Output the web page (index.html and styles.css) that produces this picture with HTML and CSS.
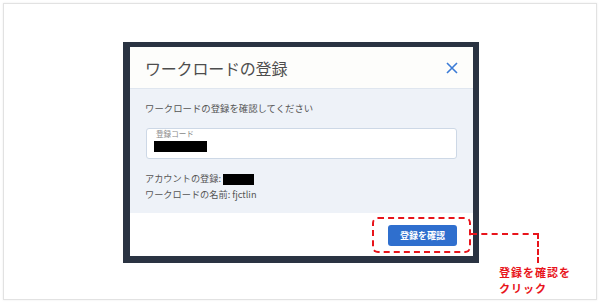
FILE: index.html
```html
<!DOCTYPE html>
<html>
  <head>
    <title>ワークロードの登録</title>
    <link rel="stylesheet" href="styles.css">
  </head>
  <body>
    <div class="canvas">
      <div class="page">
        <div class="modalFrame">
          <div class="modal">
            <div class="modalHeader">
              <span class="modalTitle">ワークロードの登録</span>
              <svg class="closeIcon" width="12" height="12" viewBox="0 0 12 12">
                <path d="M1 1 L11 11 M11 1 L1 11" stroke="#3b7bd6" stroke-width="1.6" fill="none"/>
              </svg>
            </div>
            <div class="modalBody">
              <div class="prompt">ワークロードの登録を確認してください</div>
              <div class="codeField">
                <div class="codeLabel">登録コード</div>
                <div class="redact codeValue"></div>
              </div>
              <div class="info">
                <div class="infoRow">アカウントの登録: <span class="redact accountValue"></span></div>
                <div class="infoRow">ワークロードの名前: fjctlin</div>
              </div>
            </div>
            <div class="modalFooter">
              <button class="confirmBtn">登録を確認</button>
            </div>
          </div>
        </div>
      </div>
      <div class="callout"></div>
      <div class="connector"></div>
      <div class="calloutText">
        <div class="calloutLine">登録を確認を</div>
        <div class="calloutLine">クリック</div>
      </div>
    </div>
  </body>
</html>
```

FILE: styles.css
```css
body { margin: 0; background: #fff; font-family: "Noto Sans CJK JP", "Noto Sans", sans-serif; }

.canvas { position: relative; width: 602px; height: 305px; }
.page { position: absolute; left: 3px; top: 3px; width: 594px; height: 297px; border: 1px solid #e2e2e2; box-shadow: 0 0 2px rgba(0,0,0,0.08); box-sizing: border-box; padding: 38px 0 0 119px; background: #fff; }

.modalFrame { width: 356px; background: #2a3342; padding: 5px 6px 7px 7px; box-sizing: border-box; }
.modal { display: flex; flex-direction: column; background: #fff; }

.modalHeader { display: flex; align-items: center; justify-content: space-between; height: 41px; padding: 0 15px; background: #fdfdfb; border-bottom: 1px solid #dfe6ef; }
.modalTitle { font-size: 16px; color: #4d4d4d; letter-spacing: -0.2px; }
.closeIcon { display: block; }

.modalBody { background: #eef2f8; padding: 12px 16px 11px 15px; height: 124px; box-sizing: border-box; color: #555; }
.prompt { font-size: 9.4px; line-height: 14px; }
.codeField { margin: 13px 0 0 1px; height: 31px; box-sizing: border-box; background: #fff; border: 1px solid #cdd8e6; border-radius: 3px; padding: 0 7px; }
.codeLabel { font-size: 7.6px; line-height: 9px; color: #888; padding-left: 2px; }
.redact { background: #000; }
.codeValue { width: 53px; height: 11px; margin-top: 3px; }

.info { margin-top: 11px; }
.infoRow { font-size: 9.2px; line-height: 16px; }
.accountValue { display: inline-block; width: 31px; height: 11px; vertical-align: middle; }

.modalFooter { display: flex; justify-content: flex-end; height: 43px; box-sizing: border-box; padding: 12px 16px 0 0; background: #fff; }
.confirmBtn { width: 69px; height: 21px; border: none; border-radius: 3px; background: #2f6fce; color: #fff; font-family: inherit; font-size: 9px; font-weight: bold; padding: 0; }

.callout { position: absolute; left: 372px; top: 217px; width: 99px; height: 36px; box-sizing: border-box; border: 2px dashed #e8141b; border-radius: 6px; }
.connector { position: absolute; left: 471px; top: 233px; width: 68px; height: 30px; box-sizing: border-box; border-top: 2px dashed #e8141b; border-right: 2px dashed #e8141b; }
.calloutText { position: absolute; left: 499px; top: 264px; font-size: 11px; letter-spacing: 1px; font-weight: bold; color: #e8141b; }
.calloutLine { line-height: 16px; height: 16px; }
```
